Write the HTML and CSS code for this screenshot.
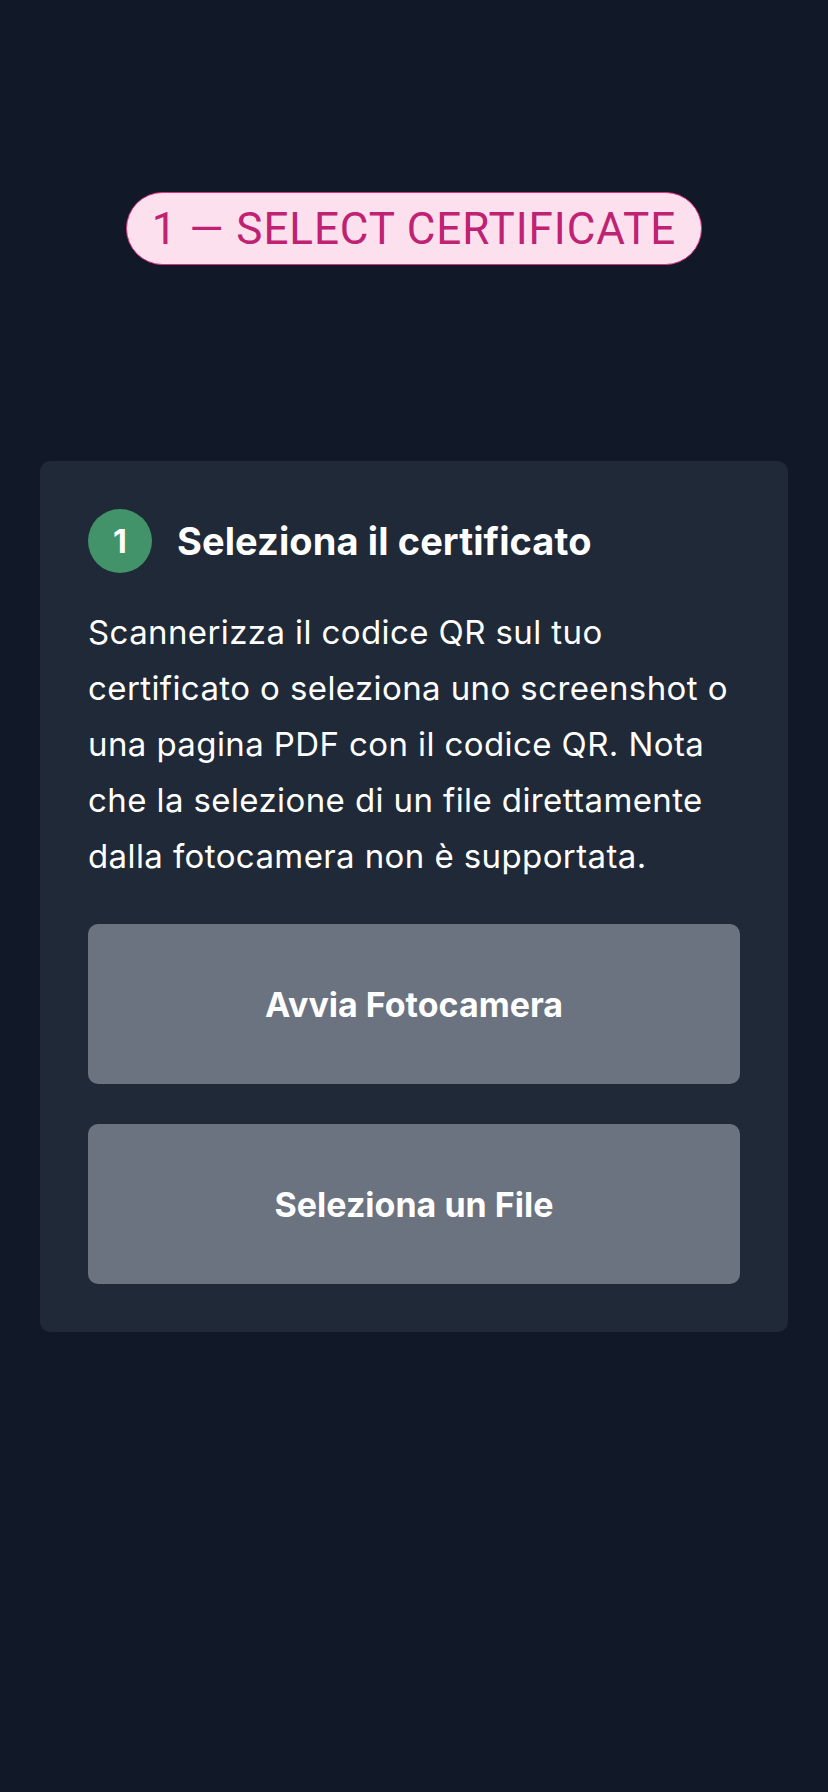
FILE: index.html
```html
<!DOCTYPE html>
<html lang="it">
<head>
<meta charset="utf-8">
<title>Seleziona il certificato</title>
<link rel="stylesheet" href="styles.css">
</head>
<body>
<main class="page">
  <div class="pill">1 — SELECT CERTIFICATE</div>
  <section class="card">
    <div class="step-head">
      <span class="step-num">1</span>
      <h2 class="step-title">Seleziona il certificato</h2>
    </div>
    <p class="step-text">Scannerizza il codice QR sul tuo certificato o seleziona uno screenshot o una pagina PDF con il codice QR. Nota che la selezione di un file direttamente dalla fotocamera non è supportata.</p>
    <div class="actions">
      <button class="btn">Avvia Fotocamera</button>
      <button class="btn">Seleziona un File</button>
    </div>
  </section>
</main>
</body>
</html>
```

FILE: styles.css
```css
html, body {
  margin: 0;
  padding: 0;
  background: #111827;
}
body {
  font-family: Inter, "Noto Sans", "Liberation Sans", sans-serif;
  color: #ffffff;
  min-height: 1792px;
}
.page {
  display: flex;
  flex-direction: column;
  align-items: center;
  padding-top: 192px;
}
.pill {
  box-sizing: border-box;
  width: 576px;
  height: 73px;
  display: flex;
  align-items: center;
  justify-content: center;
  background: #fde0ee;
  border: 1.5px solid #d9337f;
  border-radius: 37px;
  color: #c02273;
  font-family: Roboto, Inter, sans-serif;
  font-size: 44px;
  font-weight: 400;
  letter-spacing: 0.9px;
}
.card {
  box-sizing: border-box;
  width: 748px;
  margin-top: 196px;
  padding: 48px;
  background: #1f2937;
  border-radius: 10px;
}
.step-head {
  display: flex;
  align-items: center;
  gap: 25px;
}
.step-num {
  width: 64px;
  height: 64px;
  border-radius: 50%;
  background: #42926a;
  display: flex;
  align-items: center;
  justify-content: center;
  font-size: 32px;
  font-weight: 700;
  color: #ffffff;
  flex: none;
}
.step-title {
  margin: 0;
  font-size: 38px;
  font-weight: 700;
  letter-spacing: 0.1px;
}
.step-text {
  margin: 31px 0 0;
  font-size: 33px;
  line-height: 56px;
  font-weight: 400;
  letter-spacing: 0.4px;
}
.actions {
  display: flex;
  flex-direction: column;
  gap: 40px;
  margin-top: 40px;
}
.btn {
  height: 160px;
  border: none;
  border-radius: 10px;
  background: #6b7280;
  color: #ffffff;
  font-family: Inter, "Noto Sans", sans-serif;
  font-size: 34px;
  font-weight: 700;
  letter-spacing: 0;
}
```
